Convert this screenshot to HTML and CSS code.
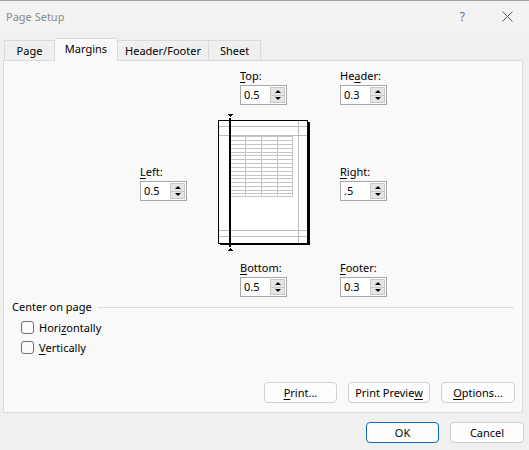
FILE: index.html
```html
<!DOCTYPE html>
<html lang="en">
<head>
  <meta charset="UTF-8">
  <title>Page Setup</title>
  <link rel="stylesheet" href="styles.css">
</head>
<body>
<div class="dialog">
  <div class="titlebar">
    <span class="title">Page Setup</span>
    <span class="help">?</span>
    <svg class="close" width="11" height="11" viewBox="0 0 11 11">
      <path d="M0.5 0.5 L10.5 10.5 M10.5 0.5 L0.5 10.5" stroke="#5c5c5c" stroke-width="1" fill="none"/>
    </svg>
  </div>

  <div class="tabs">
    <div class="tab tab-page">Page</div>
    <div class="tab tab-margins active">Margins</div>
    <div class="tab tab-hf">Header/Footer</div>
    <div class="tab tab-sheet">Sheet</div>
  </div>

  <div class="panel">
    <div class="margins">
      <div class="field f-top">
        <label><u>T</u>op:</label>
        <div class="spin"><span class="val">0.5</span><span class="arrows"><span class="up"></span><span class="down"></span></span></div>
      </div>
      <div class="field f-header">
        <label>He<u>a</u>der:</label>
        <div class="spin"><span class="val">0.3</span><span class="arrows"><span class="up"></span><span class="down"></span></span></div>
      </div>
      <div class="field f-left">
        <label><u>L</u>eft:</label>
        <div class="spin"><span class="val">0.5</span><span class="arrows"><span class="up"></span><span class="down"></span></span></div>
      </div>

      <svg class="preview" width="98" height="142" viewBox="0 0 98 142" shape-rendering="crispEdges">
        <!-- page shadow + sheet -->
        <rect x="4" y="12" width="90" height="123" fill="#000"/>
        <rect x="2.5" y="10.5" width="89" height="123" fill="#fff" stroke="#000"/>
        <!-- header / margin guides -->
        <g stroke="#bdbdbd">
          <line x1="3" y1="16.5" x2="91" y2="16.5"/>
          <line x1="3" y1="25.5" x2="91" y2="25.5"/>
          <line x1="3" y1="120.5" x2="91" y2="120.5"/>
          <line x1="3" y1="126.5" x2="91" y2="126.5"/>
          <line x1="82.5" y1="11" x2="82.5" y2="133"/>
        </g>
        <!-- cell grid -->
        <g stroke="#c4c4c4">
          <line x1="14" y1="26.5" x2="76.5" y2="26.5"/>
          <line x1="14" y1="30.5" x2="76.5" y2="30.5"/>
          <line x1="14" y1="34.5" x2="76.5" y2="34.5"/>
          <line x1="14" y1="38.5" x2="76.5" y2="38.5"/>
          <line x1="14" y1="42.5" x2="76.5" y2="42.5"/>
          <line x1="14" y1="45.5" x2="76.5" y2="45.5"/>
          <line x1="14" y1="49.5" x2="76.5" y2="49.5"/>
          <line x1="14" y1="53.5" x2="76.5" y2="53.5"/>
          <line x1="14" y1="57.5" x2="76.5" y2="57.5"/>
          <line x1="14" y1="61.5" x2="76.5" y2="61.5"/>
          <line x1="14" y1="65.5" x2="76.5" y2="65.5"/>
          <line x1="14" y1="68.5" x2="76.5" y2="68.5"/>
          <line x1="14" y1="72.5" x2="76.5" y2="72.5"/>
          <line x1="14" y1="76.5" x2="76.5" y2="76.5"/>
          <line x1="14" y1="80.5" x2="76.5" y2="80.5"/>
          <line x1="14" y1="83.5" x2="76.5" y2="83.5"/>
          <line x1="14" y1="86.5" x2="76.5" y2="86.5"/>
          <line x1="29.5" y1="26" x2="29.5" y2="87"/>
          <line x1="45.5" y1="26" x2="45.5" y2="87"/>
          <line x1="61.5" y1="26" x2="61.5" y2="87"/>
          <line x1="76.5" y1="26" x2="76.5" y2="87"/>
        </g>
        <!-- selected margin -->
        <rect x="13" y="8" width="2" height="129" fill="#000"/>
        <polygon points="11,4 17,4 14,7" fill="#000"/>
        <polygon points="11,141 17,141 14,138" fill="#000"/>
      </svg>

      <div class="field f-right">
        <label><u>R</u>ight:</label>
        <div class="spin"><span class="val">.5</span><span class="arrows"><span class="up"></span><span class="down"></span></span></div>
      </div>
      <div class="field f-bottom">
        <label><u>B</u>ottom:</label>
        <div class="spin"><span class="val">0.5</span><span class="arrows"><span class="up"></span><span class="down"></span></span></div>
      </div>
      <div class="field f-footer">
        <label><u>F</u>ooter:</label>
        <div class="spin"><span class="val">0.3</span><span class="arrows"><span class="up"></span><span class="down"></span></span></div>
      </div>
    </div>

    <div class="group">
      <div class="group-title">Center on page</div>
      <label class="check first"><span class="box"></span>Hori<u>z</u>ontally</label>
      <label class="check"><span class="box"></span><u>V</u>ertically</label>
    </div>

    <div class="panel-buttons">
      <button class="b-print"><u>P</u>rint...</button>
      <button class="b-preview">Print Previe<u>w</u></button>
      <button class="b-options"><u>O</u>ptions...</button>
    </div>
  </div>

  <div class="footer-buttons">
    <button class="b-ok default">OK</button>
    <button class="b-cancel">Cancel</button>
  </div>
</div>
</body>
</html>
```

FILE: styles.css
```css
* { box-sizing: border-box; }
body { margin: 0; background: #f0f0f0; font-family: "Segoe UI", "Noto Sans", sans-serif; font-size: 11px; color: #000; }
u { text-decoration-thickness: 1px; text-underline-offset: 2px; }

.dialog { width: 529px; height: 450px; background: #f0f0f0; display: flex; flex-direction: column; }

/* title bar */
.titlebar { height: 31px; flex: none; background: #f3f3f3; border-top: 1px solid #a3a3a3; display: flex; align-items: center; color: #8a8a8a; }
.title { flex: 1; padding-left: 6px; }
.help { margin-right: 37px; color: #707070; font-size: 12px; }
.close { margin-right: 16px; }

/* tabs */
.tabs { display: flex; align-items: flex-end; height: 29px; padding: 7px 0 0 4px; flex: none; }
.tab { height: 20px; padding-top: 2px; line-height: 16px; text-align: center; background: #f0f0f0; border: 1px solid #d9d9d9; border-bottom: none; border-left: none; }
.tab:first-child { border-left: 1px solid #d9d9d9; }
.tab.active { height: 23px; margin-bottom: -1px; background: #f9f9f9; position: relative; z-index: 1; }
.tab-page { width: 51px; }
.tab-margins { width: 63px; }
.tab-hf { width: 91px; }
.tab-sheet { width: 52px; }

/* panel */
.panel { width: 520px; height: 353px; margin-left: 3px; flex: none; border: 1px solid #dcdcdc; background: #f9f9f9; display: flex; flex-direction: column; }

.margins { display: grid; grid-template-columns: 78px 122px 80px; grid-template-rows: 37px 155px 37px; margin: 7px 0 0 136px; }
.field { display: flex; flex-direction: column; align-items: flex-start; }
.field label { line-height: 16px; margin-bottom: 1px; }
.f-top { grid-column: 2; grid-row: 1; margin-left: 22px; }
.f-header { grid-column: 3; grid-row: 1; }
.f-left { grid-column: 1; grid-row: 2; align-self: center; }
.preview { grid-column: 2; grid-row: 2; margin: 5px 0 0 -2px; }
.f-right { grid-column: 3; grid-row: 2; align-self: center; }
.f-bottom { grid-column: 2; grid-row: 3; margin-left: 22px; }
.f-footer { grid-column: 3; grid-row: 3; }

.spin { width: 47px; height: 20px; padding: 1px; border: 1px solid #a8a8a8; background: #fff; display: flex; }
.spin .val { flex: 1; padding-left: 2px; line-height: 16px; }
.arrows { width: 15px; display: flex; flex-direction: column; border: 1px solid #c8c8c8; background: #e6e6e6; }
.arrows span { flex: 1; display: flex; align-items: center; justify-content: center; }
.arrows .down { border-top: 1px solid #c8c8c8; }
.up::before { content: ""; border-left: 3px solid transparent; border-right: 3px solid transparent; border-bottom: 3px solid #000; }
.down::before { content: ""; border-left: 3px solid transparent; border-right: 3px solid transparent; border-top: 3px solid #000; }

.group { margin: 2px 0 0 8px; padding-right: 8px; }
.group-title { display: flex; align-items: center; line-height: 16px; }
.group-title::after { content: ""; flex: 1; margin-left: 6px; border-top: 1px solid #dcdcdc; }
.check { display: flex; align-items: center; height: 20px; padding-left: 9px; }
.check.first { margin-top: 2px; }
.check .box { width: 13px; height: 13px; margin-right: 5px; border: 1px solid #707070; border-radius: 3px; background: #fbfbfb; }

/* buttons */
button { height: 21px; padding: 0; font: inherit; color: #000; background: #fdfdfd; border: 1px solid #d0d0d0; border-radius: 4px; }
button.default { border-color: #0f6cbd; }
.panel-buttons { display: flex; justify-content: flex-end; gap: 11px; margin-top: auto; margin-bottom: 9px; padding-right: 7px; }
.footer-buttons { display: flex; justify-content: flex-end; gap: 11px; margin-top: 9px; padding-right: 5px; }
.b-print { width: 73px; }
.b-preview { width: 82px; }
.b-options { width: 74px; }
.b-ok { width: 73px; }
.b-cancel { width: 74px; }
```
